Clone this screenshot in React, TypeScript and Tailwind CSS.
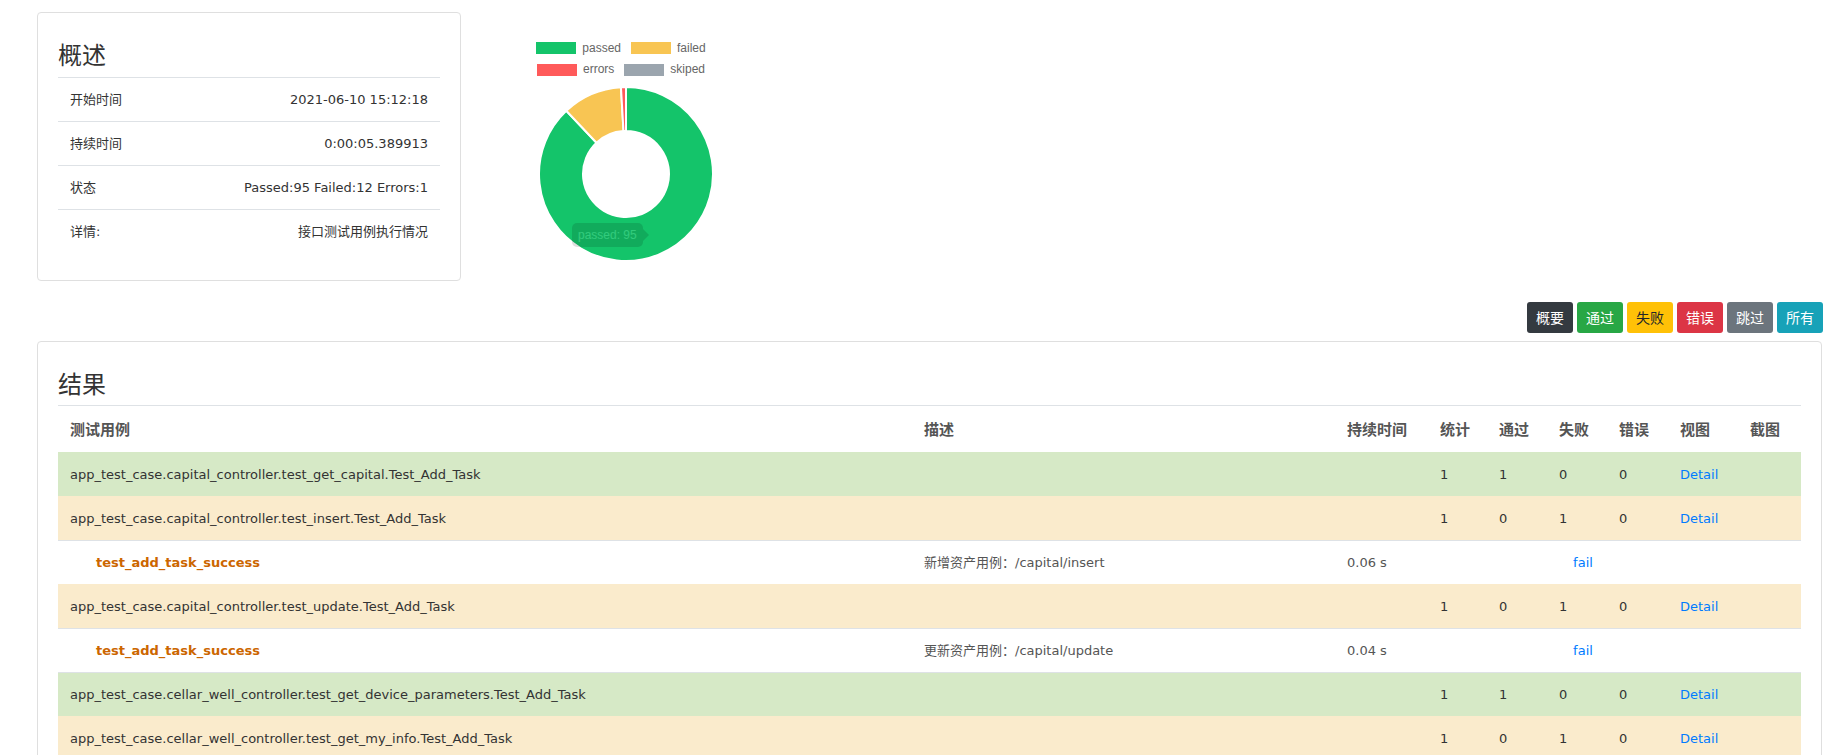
import React from "react";

const COLS =
  "grid grid-cols-[854px_423px_93px_59px_60px_60px_61px_70px_63px] items-center";

type ClassRow = {
  kind: "class";
  name: string;
  bg: "pass" | "fail";
  counts: [string, string, string, string];
};
type CaseRow = { kind: "case"; name: string; desc: string; time: string };
type Row = ClassRow | CaseRow;

const rows: Row[] = [
  {
    kind: "class",
    name: "app_test_case.capital_controller.test_get_capital.Test_Add_Task",
    bg: "pass",
    counts: ["1", "1", "0", "0"],
  },
  {
    kind: "class",
    name: "app_test_case.capital_controller.test_insert.Test_Add_Task",
    bg: "fail",
    counts: ["1", "0", "1", "0"],
  },
  {
    kind: "case",
    name: "test_add_task_success",
    desc: "新增资产用例：/capital/insert",
    time: "0.06 s",
  },
  {
    kind: "class",
    name: "app_test_case.capital_controller.test_update.Test_Add_Task",
    bg: "fail",
    counts: ["1", "0", "1", "0"],
  },
  {
    kind: "case",
    name: "test_add_task_success",
    desc: "更新资产用例：/capital/update",
    time: "0.04 s",
  },
  {
    kind: "class",
    name: "app_test_case.cellar_well_controller.test_get_device_parameters.Test_Add_Task",
    bg: "pass",
    counts: ["1", "1", "0", "0"],
  },
  {
    kind: "class",
    name: "app_test_case.cellar_well_controller.test_get_my_info.Test_Add_Task",
    bg: "fail",
    counts: ["1", "0", "1", "0"],
  },
];

function SummaryCard() {
  const items: [string, string][] = [
    ["开始时间", "2021-06-10 15:12:18"],
    ["持续时间", "0:00:05.389913"],
    ["状态", "Passed:95 Failed:12 Errors:1"],
    ["详情:", "接口测试用例执行情况"],
  ];
  return (
    <div className="w-[424px] shrink-0 rounded-[4px] border border-[#dfdfdf] bg-white p-[20px]">
      <div className="mt-[7px] mb-[9px] font-['Noto_Sans_CJK_SC',sans-serif] text-[24px] leading-[28px] text-[#333]">
        概述
      </div>
      <div className="mb-[7px]">
        {items.map(([k, v]) => (
          <div
            key={k}
            className="flex h-[44px] items-center justify-between border-t border-[#dee2e6] px-[12px] text-[13px] text-[#333]"
          >
            <span>{k}</span>
            <span>{v}</span>
          </div>
        ))}
      </div>
    </div>
  );
}

function LegendItem({ color, label }: { color: string; label: string }) {
  return (
    <div className="mr-[10px] flex items-center">
      <span className="block h-[12px] w-[40px]" style={{ background: color }} />
      <span className="ml-[6px] text-[12px] leading-[21px] text-[#666]">{label}</span>
    </div>
  );
}

function Chart() {
  return (
    <div className="relative ml-[65px] w-[200px] shrink-0 pt-[25px] font-['Liberation_Sans',Arial,sans-serif]">
      <div className="flex h-[22px] justify-center">
        <LegendItem color="#14c46a" label="passed" />
        <LegendItem color="#f8c553" label="failed" />
      </div>
      <div className="flex h-[21px] justify-center">
        <LegendItem color="#ff5a5a" label="errors" />
        <LegendItem color="#9ba5ae" label="skiped" />
      </div>
      <svg
        width="180"
        height="180"
        viewBox="0 0 180 180"
        className="mx-auto mt-[4px] block"
      >
        <path
          d="M90,3 A87,87 0 1 1 30.30,26.72 L60.49,58.72 A43,43 0 1 0 90,47 Z"
          fill="#14c46a"
          stroke="#fff"
          strokeWidth="2"
        />
        <path
          d="M30.30,26.72 A87,87 0 0 1 84.94,3.15 L87.50,47.07 A43,43 0 0 0 60.49,58.72 Z"
          fill="#f8c553"
          stroke="#fff"
          strokeWidth="2"
        />
        <path
          d="M84.94,3.15 A87,87 0 0 1 90,3 L90,47 A43,43 0 0 0 87.50,47.07 Z"
          fill="#ff5a5a"
          stroke="#fff"
          strokeWidth="2"
        />
      </svg>
      <div className="absolute left-[46px] top-[211px] flex items-center opacity-[0.12]">
        <div className="rounded-[5px] bg-black px-[6px] py-[6px] text-[12px] leading-[12px] text-white">
          passed: 95
        </div>
        <div className="h-0 w-0 border-y-[6px] border-l-[6px] border-y-transparent border-l-black" />
      </div>
    </div>
  );
}

function Buttons() {
  const btns: [string, string, string][] = [
    ["概要", "bg-[#343a40]", "text-white"],
    ["通过", "bg-[#28a745]", "text-white"],
    ["失败", "bg-[#ffc107]", "text-[#212529]"],
    ["错误", "bg-[#dc3545]", "text-white"],
    ["跳过", "bg-[#6c757d]", "text-white"],
    ["所有", "bg-[#17a2b8]", "text-white"],
  ];
  return (
    <div className="mt-[21px] mr-[-1px] flex justify-end gap-[4px] font-['Noto_Sans_CJK_SC',sans-serif]">
      {btns.map(([t, bg, fg]) => (
        <div
          key={t}
          className={`flex h-[31px] w-[46px] items-center justify-center rounded-[3px] text-[14px] ${bg} ${fg}`}
        >
          {t}
        </div>
      ))}
    </div>
  );
}

function ResultsCard() {
  const headers = ["测试用例", "描述", "持续时间", "统计", "通过", "失败", "错误", "视图", "截图"];
  return (
    <div className="mt-[8px] rounded-[4px] border border-[#dfdfdf] bg-white p-[20px]">
      <div className="mt-[7px] mb-[8px] font-['Noto_Sans_CJK_SC',sans-serif] text-[24px] leading-[28px] text-[#333]">
        结果
      </div>
      <div className={`${COLS} h-[47px] border-t border-[#dee2e6]`}>
        {headers.map((h) => (
          <div
            key={h}
            className="pl-[12px] font-['Noto_Sans_CJK_SC',sans-serif] text-[15px] font-bold text-[#555]"
          >
            {h}
          </div>
        ))}
      </div>
      {rows.map((r, i) =>
        r.kind === "class" ? (
          <div
            key={i}
            className={`${COLS} h-[44px] border-t ${
              r.bg === "pass"
                ? "border-[#d6e9c6] bg-[#d6e9c6]"
                : "border-[#faebcc] bg-[#faebcc]"
            } ${i > 0 && rows[i - 1].kind === "case" ? "border-[#dee2e6]" : ""} text-[13px] text-[#333]`}
          >
            <div className="pl-[12px] whitespace-nowrap">{r.name}</div>
            <div />
            <div />
            {r.counts.map((c, j) => (
              <div key={j} className="pl-[12px]">
                {c}
              </div>
            ))}
            <div className="pl-[12px] text-[#007bff]">Detail</div>
            <div />
          </div>
        ) : (
          <div
            key={i}
            className={`${COLS} h-[44px] border-t border-[#dee2e6] bg-white text-[13px]`}
          >
            <div className="pl-[38px] font-bold text-[#cc6600]">{r.name}</div>
            <div className="pl-[12px] text-[#555]">{r.desc}</div>
            <div className="pl-[12px] text-[#555]">{r.time}</div>
            <div className="col-span-5 text-center text-[#007bff]">fail</div>
            <div />
          </div>
        )
      )}
    </div>
  );
}

export default function App() {
  return (
    <div className="min-h-screen w-full bg-white font-['DejaVu_Sans','Noto_Sans_CJK_SC',sans-serif]">
      <div className="ml-[37px] w-[1785px] pt-[12px]">
        <div className="flex items-start">
          <SummaryCard />
          <Chart />
        </div>
        <Buttons />
        <ResultsCard />
      </div>
    </div>
  );
}
